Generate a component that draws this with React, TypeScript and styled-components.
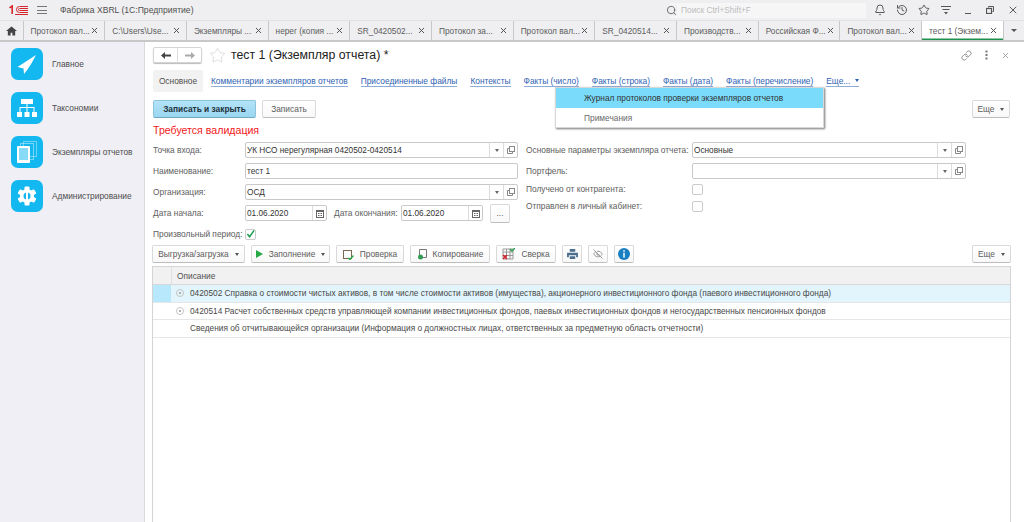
import React from "react"
import styled, { createGlobalStyle } from "styled-components"
import { Bell, History, Star, Search, X, Link, EyeOff } from "lucide-react"

const GlobalStyle = createGlobalStyle`
  html, body {
    margin: 0;
    padding: 0;
    background: #fff;
  }
  body {
    font-family: "Liberation Sans", Arial, sans-serif;
    font-size: 8.35px;
    color: #505050;
  }
  * { box-sizing: border-box; }
`

const Page = styled.div`
  width: 1024px;
  height: 522px;
  display: flex;
  flex-direction: column;
  overflow: hidden;
`

const Header = styled.header`
  height: 20px;
  display: flex;
  align-items: center;
  background: #efeff1;
  padding-left: 9px;
  flex: none;
`

const MenuBars = styled.div`
  width: 10px;
  height: 8px;
  margin-left: 9px;
  border-top: 1px solid #777;
  border-bottom: 1px solid #777;
  position: relative;
  &:after {
    content: '';
    position: absolute;
    left: 0;
    right: 0;
    top: 2.5px;
    height: 1px;
    background: #777;
  }
`

const AppTitle = styled.div`
  margin-left: 13px;
  color: #505050;
  font-size: 8.6px;
`

const SearchBox = styled.div`
  margin-left: auto;
  width: 196px;
  height: 15px;
  display: flex;
  align-items: center;
  gap: 3px;
  color: #bdbdbd;
  background: #f6f6f7;
  & > svg { margin-left: -4px; margin-right: 1px; color: #666; background: #efeff1; }
`

const HeaderIcons = styled.div`
  width: 158px;
  display: flex;
  align-items: center;
  padding-left: 7px;
  gap: 9.2px;
  color: #5a5a5a;
`

const WinButton = styled.span`
  width: 13px;
  height: 13px;
  display: flex;
  align-items: center;
  justify-content: center;
`

const TabsBar = styled.nav`
  height: 22px;
  display: flex;
  flex: none;
  background: #efeff1;
  border-top: 1px solid #e2e2e2;
  border-bottom: 2px solid #c8c8c8;
`

const HomeTab = styled.div`
  width: 23.5px;
  display: flex;
  align-items: center;
  justify-content: center;
  border-right: 1px solid #c8c8c8;
`

const Tab = styled.div<{ $active?: boolean }>`
  width: 81.7px;
  display: flex;
  align-items: center;
  justify-content: space-between;
  padding: 0 5px 0 7px;
  border-right: 1px solid #c8c8c8;
  white-space: nowrap;
  overflow: hidden;
  background: ${p => (p.$active ? "#fff" : "transparent")};
  box-shadow: ${p => (p.$active ? "inset 0 -1.5px 0 #1e9150" : "none")};
  color: #5c5c5c;
  font-size: 8.3px;
  & svg { color: #4b4b4b; flex: none; }
`

const TabsArrow = styled.div`
  flex: 1;
  display: flex;
  align-items: center;
  justify-content: center;
  &:after {
    content: '';
    border-left: 3px solid transparent;
    border-right: 3px solid transparent;
    border-top: 3px solid #555;
  }
`

const Body = styled.div`
  flex: 1;
  min-height: 0;
  display: flex;
`

const Sidebar = styled.aside`
  width: 145px;
  flex: none;
  background: #f0eff5;
  border-right: 1px solid #d9d9dd;
  padding-top: 6px;
  display: flex;
  flex-direction: column;
  gap: 12px;
`

const SideItem = styled.div`
  display: flex;
  align-items: center;
  gap: 9px;
  padding-left: 11px;
  height: 32px;
  color: #4d4d4d;
  white-space: nowrap;
`

const SideIcon = styled.div`
  width: 32px;
  height: 32px;
  border-radius: 7px;
  background: #12b8ef;
  display: flex;
  align-items: center;
  justify-content: center;
  flex: none;
`

const Main = styled.main`
  flex: 1;
  position: relative;
  padding: 3px 14px 0 8px;
  display: flex;
  flex-direction: column;
  min-width: 0;
`

const TitleRow = styled.div`
  height: 20px;
  display: flex;
  align-items: center;
`

const HistoryButtons = styled.div`
  width: 49px;
  height: 16px;
  display: flex;
  border: 1px solid #d4d4d4;
  border-radius: 2px;
  box-shadow: 0 1px 1px #bbb;
`

const HistoryButton = styled.span<{ $muted?: boolean }>`
  flex: 1;
  display: flex;
  align-items: center;
  justify-content: center;
  color: ${p => (p.$muted ? "#aaa" : "#444")};
  & + & { border-left: 1px solid #ddd; }
`

const TitleStar = styled(Star)`
  margin-left: 7px;
  color: #cfcfcf;
`

const Title = styled.h1`
  margin: 0 0 0 5px;
  font-size: 12.3px;
  font-weight: 400;
  color: #222;
  white-space: nowrap;
`

const TitleActions = styled.div`
  margin-left: auto;
  display: flex;
  align-items: center;
  gap: 13px;
  color: #8a8a8a;
`

const NavRow = styled.div`
  margin-top: 5px;
  height: 22px;
  display: flex;
  align-items: center;
  gap: 13px;
`

const ActiveSection = styled.div`
  width: 50px;
  height: 22px;
  background: #f2f2f2;
  border-radius: 2px;
  display: flex;
  align-items: center;
  justify-content: center;
  margin-right: -5px;
`

const SectionLink = styled.a`
  color: #2f62b4;
  border-bottom: 1px solid #8fabd8;
  line-height: 10px;
  white-space: nowrap;
  display: flex;
  align-items: center;
  gap: 5px;
`

const DownMark = styled.span<{ $color?: string }>`
  display: inline-block;
  flex: none;
  border-left: 2.5px solid transparent;
  border-right: 2.5px solid transparent;
  border-top: 3px solid ${p => p.$color || "#555"};
`

const CommandRow = styled.div`
  margin-top: 8px;
  height: 18px;
  display: flex;
  align-items: center;
  gap: 6px;
`

const Button = styled.button<{ $primary?: boolean; $right?: boolean; $width?: number }>`
  height: 18px;
  width: ${p => (p.$width ? `${p.$width}px` : "auto")};
  padding: 0 3px;
  display: flex;
  align-items: center;
  justify-content: center;
  gap: 6px;
  font: inherit;
  color: ${p => (p.$primary ? "#21323c" : "#5c5c5c")};
  font-weight: ${p => (p.$primary ? 700 : 400)};
  background: ${p => (p.$primary ? "linear-gradient(#b3e3f8, #9bd6f0)" : "linear-gradient(#fff, #f8f8f8)")};
  border: 1px solid ${p => (p.$primary ? "#8dc4dd" : "#d9d9d9")};
  border-bottom-color: ${p => (p.$primary ? "#6fa9c4" : "#bdbdbd")};
  border-radius: 2px;
  margin-left: ${p => (p.$right ? "auto" : "0")};
  white-space: nowrap;
  & svg { flex: none; }
`

const Warning = styled.div`
  margin-top: 5px;
  height: 14px;
  color: #f01818;
  font-size: 10.6px;
  line-height: 14px;
`

const FormGrid = styled.div`
  margin-top: 5px;
  display: flex;
  gap: 8px;
`

const FormColumn = styled.div<{ $width: number }>`
  width: ${p => p.$width}px;
  display: flex;
  flex-direction: column;
  gap: 5px;
`

const FormRow = styled.div<{ $height?: number; $pull?: number }>`
  display: flex;
  align-items: center;
  height: ${p => p.$height || 16}px;
  margin-top: ${p => p.$pull || 0}px;
  white-space: nowrap;
`

const Label = styled.label<{ $width?: number; $inner?: boolean }>`
  width: ${p => (p.$width ? `${p.$width}px` : "auto")};
  margin-left: ${p => (p.$inner ? "7px" : "0")};
  flex: none;
  color: #606060;
`

const Field = styled.div<{ $width?: number }>`
  height: 16px;
  flex: ${p => (p.$width ? "none" : 1)};
  width: ${p => (p.$width ? `${p.$width}px` : "auto")};
  display: flex;
  align-items: center;
  border: 1px solid #c9c9c9;
  border-radius: 2px;
  background: #fff;
  color: #333;
  font-size: 8.25px;
`

const FieldText = styled.span`
  flex: 1;
  padding-left: 1px;
`

const FieldButton = styled.span`
  width: 14px;
  height: 100%;
  border-left: 1px solid #dcdcdc;
  display: flex;
  align-items: center;
  justify-content: center;
  color: #777;
`

const Check = styled.span`
  width: 11px;
  height: 11px;
  border: 1px solid #cbcbcb;
  border-radius: 2px;
  display: flex;
  align-items: center;
  justify-content: center;
`

const DotsButton = styled(Button)`
  width: 20px;
  padding: 0;
  margin-left: 7px;
  height: 19px;
`

const Toolbar = styled(CommandRow)`
  margin-top: 3px;
  margin-left: -1px;
  margin-right: -1px;
`

const IconButton = styled(Button)`
  width: 20px;
  padding: 0;
`

const Table = styled.div`
  margin: 3px -1px 0;
  flex: 1;
  border: 1px solid #d4d4d4;
  border-bottom: none;
`

const TableHead = styled.div`
  height: 18px;
  background: #f1f1f1;
  border-bottom: 1px solid #d8d8d8;
  display: flex;
  align-items: center;
`

const MarkCell = styled.div<{ $on?: boolean }>`
  width: 18px;
  height: 100%;
  flex: none;
  background: ${p => (p.$on ? "#b7e8fb" : "transparent")};
`

const HeadCell = styled.div`
  padding-left: 5px;
  height: 100%;
  flex: 1;
  display: flex;
  align-items: center;
  border-left: 1px solid #e0e0e0;
`

const TableRow = styled.div<{ $selected?: boolean }>`
  height: 17.5px;
  display: flex;
  align-items: center;
  border-bottom: 1px solid #e6e6e6;
  background: ${p => (p.$selected ? "#e2f5fc" : "#fff")};
  color: #484848;
  font-size: 8.3px;
  white-space: nowrap;
`

const TreeMark = styled.span<{ $hidden?: boolean }>`
  width: 19px;
  display: flex;
  justify-content: flex-end;
  padding-right: 6px;
  visibility: ${p => (p.$hidden ? "hidden" : "visible")};
  &:before {
    content: '';
    width: 6px;
    height: 6px;
    border-radius: 50%;
    border: 1px solid #c4c4c4;
    background: radial-gradient(#b0b0b0 0 1px, transparent 1.2px);
  }
`

const PopupMenu = styled.div`
  position: absolute;
  left: 410px;
  top: 45px;
  width: 269px;
  height: 41px;
  background: #fff;
  border: 1px solid #d8d8d8;
  box-shadow: 1px 1px 2px #777;
  z-index: 2;
`

const PopupItem = styled.div<{ $active?: boolean }>`
  height: 20px;
  padding-left: 28px;
  display: flex;
  align-items: center;
  color: ${p => (p.$active ? "#333" : "#6a6a6a")};
  background: ${p => (p.$active ? "#7adbfb" : "transparent")};
`

const tabs = [
  "Протокол вал...",
  "C:\\Users\\Use...",
  "Экземпляры ...",
  "нерег (копия ...",
  "SR_0420502...",
  "Протокол за...",
  "Протокол вал...",
  "SR_0420514...",
  "Производств...",
  "Российская Ф...",
  "Протокол вал...",
]

const sections = [
  "Комментарии экземпляров отчетов",
  "Присоединенные файлы",
  "Контексты",
  "Факты (число)",
  "Факты (строка)",
  "Факты (дата)",
  "Факты (перечисление)",
]

const rows = [
  "0420502 Справка о стоимости чистых активов, в том числе стоимости активов (имущества), акционерного инвестиционного фонда (паевого инвестиционного фонда)",
  "0420514 Расчет собственных средств управляющей компании инвестиционных фондов, паевых инвестиционных фондов и негосударственных пенсионных фондов",
  "Сведения об отчитывающейся организации (Информация о должностных лицах, ответственных за предметную область отчетности)",
]

const Logo = () => (
  <svg width="19" height="10" viewBox="0 0 19 10" fill="none" stroke="#d8262c">
    <path d="M0.500 2.800 3.200 1V9" strokeWidth="1.600" />
    <path d="M19 7.500H10.500A3 3 0 1 1 10.500 1.500H19" strokeWidth="1" />
    <path d="M19 5.500H10.500A1 1 0 1 1 10.500 3.500H19" strokeWidth="1" />
    <path d="M6 9.500H19" strokeWidth="1" />
  </svg>
)

const PlaneIcon = () => (
  <svg width="20" height="20" viewBox="0 0 20 20" fill="#fff">
    <path d="M19 1 0.500 13 6.500 14.500 7 20 10.500 15.500Q15 9 19 1Z" />
  </svg>
)

const TreeIcon = () => (
  <svg width="20" height="18" viewBox="0 0 20 18" fill="#fff">
    <rect x="4" y="0" width="12" height="5" />
    <rect x="0" y="13" width="5" height="5" />
    <rect x="7.500" y="13" width="5" height="5" />
    <rect x="15" y="13" width="5" height="5" />
    <path d="M9.500 5h1v3h7v5h-1V9h-6v4h-1V9h-6v4h-1V8h7z" />
  </svg>
)

const PagesIcon = () => (
  <svg width="20" height="22" viewBox="0 0 20 22" fill="none">
    <rect x="6.500" y="0.500" width="13" height="15" stroke="#cdeefb" strokeDasharray="1 1" />
    <rect x="3.500" y="2.500" width="13" height="16" stroke="#dff5fd" strokeDasharray="1 1" />
    <rect x="0" y="5" width="13" height="17" rx="1" fill="#fff" />
    <path d="M2 8h9M2 10h9M2 12h9M2 14h9M2 16h9M2 18h9" stroke="#12b8ef" />
  </svg>
)

const GearIcon = () => (
  <svg width="20" height="20" viewBox="0 0 20 20" fill="#fff">
    <circle cx="10" cy="10" r="7" />
    {[0, 60, 120, 180, 240, 300].map(a => (
      <rect key={a} x="7.500" y="0.500" width="5" height="5" rx="1" transform={`rotate(${a} 10 10)`} />
    ))}
    <circle cx="10" cy="10" r="3.500" fill="#12b8ef" />
    <rect x="9" y="6" width="2" height="8" />
  </svg>
)

const ComboIcon = () => (
  <svg width="8" height="8" viewBox="0 0 8 8" fill="none" stroke="#888">
    <rect x="2.500" y="0.500" width="5" height="5" />
    <path d="M2 2.500H0.500V7.500H5.500V6" />
  </svg>
)

const CalendarIcon = () => (
  <svg width="8" height="9" viewBox="0 0 8 9" fill="#666">
    <path d="M0 1h8v8H0zM1 3v5h6V3z" />
    <path d="M2 4h1v1H2zM3.500 4h1v1h-1zM5 4h1v1H5zM2 6h1v1H2zM3.500 6h1v1h-1zM5 6h1v1H5z" />
  </svg>
)

const CheckIcon = () => (
  <svg width="10" height="10" viewBox="0 0 10 10" fill="none" stroke="#169a49" strokeWidth="1.600">
    <path d="M1.500 5 4 8 9 1" />
  </svg>
)

const ArrowIcon = ({ flip }: { flip?: boolean }) => (
  <svg width="10" height="7" viewBox="0 0 10 7" fill="currentColor" transform={flip ? "scale(-1 1)" : undefined}>
    <path d="M0 3.500 4 0V2.500H10V4.500H4V7Z" />
  </svg>
)

const ComboField = ({ value }: { value?: string }) => (
  <Field>
    <FieldText>{value}</FieldText>
    <FieldButton><DownMark $color="#666" /></FieldButton>
    <FieldButton><ComboIcon /></FieldButton>
  </Field>
)

const DateField = ({ value }: { value: string }) => (
  <Field $width={82}>
    <FieldText>{value}</FieldText>
    <FieldButton><CalendarIcon /></FieldButton>
  </Field>
)

const App: React.FC = () => {
  return (
    <Page>
      <GlobalStyle />
      <Header>
        <Logo />
        <MenuBars />
        <AppTitle>Фабрика XBRL (1С:Предприятие)</AppTitle>
        <SearchBox>
          <Search size={11} />
          Поиск Ctrl+Shift+F
        </SearchBox>
        <HeaderIcons>
          <WinButton><Bell size={12} /></WinButton>
          <WinButton><History size={12} /></WinButton>
          <WinButton><Star size={12} /></WinButton>
          <WinButton>
            <svg width="12" height="10" viewBox="0 0 12 10" fill="none" stroke="#555">
              <path d="M1 1.500h10M2.500 4.500h7" />
              <path d="M4 7h4L6 9.500z" fill="#555" stroke="none" />
            </svg>
          </WinButton>
          <WinButton>
            <svg width="8" height="8" viewBox="0 0 8 8" stroke="#555"><path d="M1 7.500h6" /></svg>
          </WinButton>
          <WinButton>
            <svg width="8" height="8" viewBox="0 0 8 8" fill="none" stroke="#555">
              <rect x="0.500" y="2.500" width="5" height="5" strokeWidth="1.200" />
              <path d="M2.500 1.500V.5h5v5H6.500" />
            </svg>
          </WinButton>
          <WinButton><X size={12} /></WinButton>
        </HeaderIcons>
      </Header>

      <TabsBar>
        <HomeTab>
          <svg width="11" height="10" viewBox="0 0 12 10" fill="#444">
            <path d="M6 0 12 5H10V10H7V7H5V10H2V5H0Z" />
          </svg>
        </HomeTab>
        {tabs.map((t, i) => (
          <Tab key={i}>
            {t}
            <X size={9} strokeWidth={2.500} />
          </Tab>
        ))}
        <Tab $active>
          тест 1 (Экзем...
          <X size={9} strokeWidth={2.500} />
        </Tab>
        <TabsArrow />
      </TabsBar>

      <Body>
        <Sidebar>
          <SideItem><SideIcon><PlaneIcon /></SideIcon>Главное</SideItem>
          <SideItem><SideIcon><TreeIcon /></SideIcon>Таксономии</SideItem>
          <SideItem><SideIcon><PagesIcon /></SideIcon>Экземпляры отчетов</SideItem>
          <SideItem><SideIcon><GearIcon /></SideIcon>Администрирование</SideItem>
        </Sidebar>

        <Main>
          <TitleRow>
            <HistoryButtons>
              <HistoryButton><ArrowIcon /></HistoryButton>
              <HistoryButton $muted><ArrowIcon flip /></HistoryButton>
            </HistoryButtons>
            <TitleStar size={17} strokeWidth={1} />
            <Title>тест 1 (Экземпляр отчета) *</Title>
            <TitleActions>
              <Link size={11} />
              <svg width="3" height="10" viewBox="0 0 3 10" fill="#777">
                <rect x="0.500" y="0.500" width="2" height="2" />
                <rect x="0.500" y="4" width="2" height="2" />
                <rect x="0.500" y="7.500" width="2" height="2" />
              </svg>
              <X size={9} strokeWidth={2} />
            </TitleActions>
          </TitleRow>

          <NavRow>
            <ActiveSection>Основное</ActiveSection>
            {sections.map(s => <SectionLink key={s}>{s}</SectionLink>)}
            <SectionLink>Еще... <DownMark $color="#2f62b4" /></SectionLink>
          </NavRow>

          <PopupMenu>
            <PopupItem $active>Журнал протоколов проверки экземпляров отчетов</PopupItem>
            <PopupItem>Примечания</PopupItem>
          </PopupMenu>

          <CommandRow>
            <Button $primary $width={103}>Записать и закрыть</Button>
            <Button $width={54}>Записать</Button>
            <Button $right $width={38}>Еще <DownMark /></Button>
          </CommandRow>

          <Warning>Требуется валидация</Warning>

          <FormGrid>
            <FormColumn $width={365}>
              <FormRow>
                <Label $width={92}>Точка входа:</Label>
                <ComboField value="УК НСО нерегулярная 0420502-0420514" />
              </FormRow>
              <FormRow>
                <Label $width={92}>Наименование:</Label>
                <Field><FieldText>тест 1</FieldText></Field>
              </FormRow>
              <FormRow>
                <Label $width={92}>Организация:</Label>
                <ComboField value="ОСД" />
              </FormRow>
              <FormRow>
                <Label $width={92}>Дата начала:</Label>
                <DateField value="01.06.2020" />
                <Label $inner $width={67}>Дата окончания:</Label>
                <DateField value="01.06.2020" />
                <DotsButton>...</DotsButton>
              </FormRow>
              <FormRow>
                <Label $width={92}>Произвольный период:</Label>
                <Check><CheckIcon /></Check>
              </FormRow>
            </FormColumn>
            <FormColumn $width={440}>
              <FormRow>
                <Label $width={166}>Основные параметры экземпляра отчета:</Label>
                <ComboField value="Основные" />
              </FormRow>
              <FormRow>
                <Label $width={166}>Портфель:</Label>
                <ComboField />
              </FormRow>
              <FormRow $height={12} $pull={-1}>
                <Label $width={166}>Получено от контрагента:</Label>
                <Check />
              </FormRow>
              <FormRow $height={12}>
                <Label $width={166}>Отправлен в личный кабинет:</Label>
                <Check />
              </FormRow>
            </FormColumn>
          </FormGrid>

          <Toolbar>
            <Button $width={93}>Выгрузка/загрузка <DownMark /></Button>
            <Button $width={79}>
              <svg width="7" height="8" viewBox="0 0 7 8" fill="#28a745"><path d="M0 0 7 4 0 8z" /></svg>
              Заполнение <DownMark />
            </Button>
            <Button $width={68}>
              <svg width="11" height="11" viewBox="0 0 11 11" fill="none" stroke="#7a6a55">
                <rect x="0.500" y="1.500" width="8" height="8" />
                <path d="M5 9 7 10.500 10.500 6.500" stroke="#28a745" strokeWidth="1.300" />
              </svg>
              Проверка
            </Button>
            <Button $width={80}>
              <svg width="10" height="11" viewBox="0 0 10 11" fill="none" stroke="#777">
                <path d="M2.500.5H9.500V8.500H2.500z" />
                <circle cx="3.500" cy="8" r="2.500" fill="#2f9e52" stroke="none" />
              </svg>
              Копирование
            </Button>
            <Button $width={60}>
              <svg width="13" height="12" viewBox="0 0 13 12" fill="none">
                <path d="M1 1h10v10H1zM1 4h10M1 7.500h10M4.500 1v10M8 1v10" stroke="#999" />
                <path d="M8 1l2 2 3-3" stroke="#2f9e52" strokeWidth="1.500" />
                <path d="M1 7l4 4M5 7l-4 4" stroke="#d8262c" strokeWidth="1.500" />
              </svg>
              Сверка
            </Button>
            <IconButton>
              <svg width="11" height="10" viewBox="0 0 12 11" fill="#4d6f8f">
                <path d="M3 0h6v3H3zM0 4h12v5h-2V7H2v2H0zM3 8h6v3H3z" />
              </svg>
            </IconButton>
            <IconButton><EyeOff size={10} color="#888" /></IconButton>
            <IconButton>
              <svg width="12" height="12" viewBox="0 0 13 13">
                <circle cx="6.500" cy="6.500" r="6.500" fill="#1a7fc1" />
                <path d="M5.700 2.500h1.600v1.500H5.700zM5.700 5.200h1.600v5.200H5.700z" fill="#fff" />
              </svg>
            </IconButton>
            <Button $right $width={39}>Еще <DownMark /></Button>
          </Toolbar>

          <Table>
            <TableHead>
              <MarkCell />
              <HeadCell>Описание</HeadCell>
            </TableHead>
            {rows.map((r, i) => (
              <TableRow key={i} $selected={i === 0}>
                <MarkCell $on={i === 0} />
                <TreeMark $hidden={i === 2} />
                {r}
              </TableRow>
            ))}
          </Table>
        </Main>
      </Body>
    </Page>
  )
}

export default App
